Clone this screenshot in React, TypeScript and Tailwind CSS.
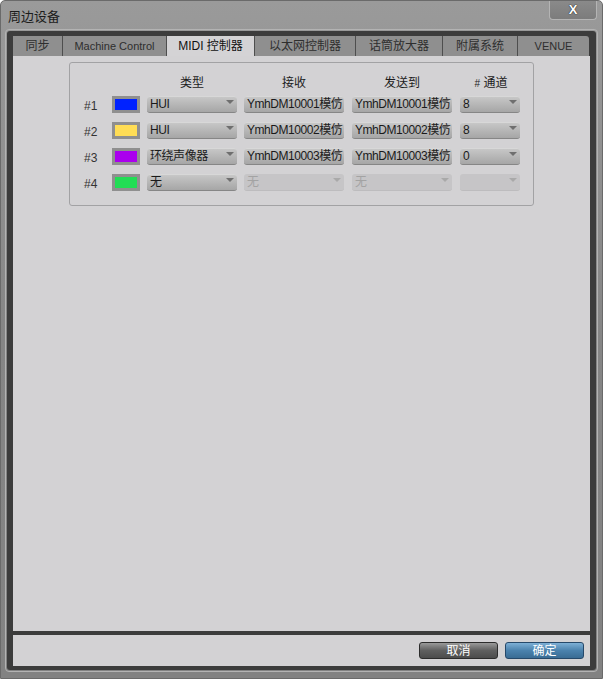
import React from 'react';

const FONT = "font-['Liberation_Sans','Noto_Sans_CJK_SC',sans-serif]";

const TABS = [
  { label: '同步', w: 'w-[50px]' },
  { label: 'Machine Control', w: 'w-[104px]', small: true },
  { label: 'MIDI 控制器', w: 'w-[88px]', active: true },
  { label: '以太网控制器', w: 'w-[101px]' },
  { label: '话筒放大器', w: 'w-[87px]' },
  { label: '附属系统', w: 'w-[75px]' },
  { label: 'VENUE', w: 'w-[71px]', small: true, last: true },
];

const ROWS = [
  { id: '#1', color: 'bg-[#0022ff]', type: 'HUI', rx: 'YmhDM10001模仿', tx: 'YmhDM10001模仿', ch: '8' },
  { id: '#2', color: 'bg-[#ffdd55]', type: 'HUI', rx: 'YmhDM10002模仿', tx: 'YmhDM10002模仿', ch: '8' },
  { id: '#3', color: 'bg-[#aa00ee]', type: '环绕声像器', rx: 'YmhDM10003模仿', tx: 'YmhDM10003模仿', ch: '0' },
  { id: '#4', color: 'bg-[#22dd55]', type: '无', rx: '无', tx: '无', ch: '', off: true },
];

function Select({ value, w, disabled }: { value: string; w: string; disabled?: boolean }) {
  return (
    <div
      className={`relative ${w} h-[17px] rounded-[3px] overflow-hidden flex items-center pl-[3px] text-[12px] tracking-[-0.45px] leading-none whitespace-nowrap ${
        disabled
          ? 'bg-[#c6c5c7] text-[#a3a3a3] border-b border-[#bdbcbe]'
          : 'bg-gradient-to-b from-[#c9c9c9] to-[#a6a6a6] text-[#1a1a1a] border-b border-[#868686] shadow-[inset_0_1px_0_#d8d8d8]'
      }`}
    >
      <span>{value}</span>
      <span
        className={`absolute right-[3px] top-[4px] w-0 h-0 border-l-[4px] border-r-[4px] border-t-[4px] border-l-transparent border-r-transparent ${
          disabled ? 'border-t-[#a9a9a9]' : 'border-t-[#6f6f6f]'
        }`}
      />
    </div>
  );
}

export default function App() {
  return (
    <div className={`${FONT} w-[603px] h-[679px] flex flex-col bg-gradient-to-b from-[#9a9a9a] via-[#858585] to-[#828282] border border-[#6a6a6a] rounded-t-[5px] overflow-hidden`}>
      {/* title bar */}
      <div className="h-[28px] flex items-start justify-between pl-[7px] pr-[5px]">
        <span className="mt-[6px] text-[13px] text-[#1c1c1c]">周边设备</span>
        <button className="w-[48px] h-[19px] flex items-center justify-center rounded-b-[4px] border border-t-0 border-[#b4b4b4] bg-gradient-to-b from-[#8a8a8a] to-[#7c7c7c] text-[13px] font-bold text-white [text-shadow:0_0_1px_#222,0_0_1px_#222]">
          X
        </button>
      </div>

      {/* dark frame */}
      <div className="mx-[4px] mb-[6px] flex-1 rounded-[4px] border border-[#b3b3b3] p-[1px]">
        <div className="h-full bg-[#3c3c3c] rounded-[3px] flex flex-col px-[6px] pt-[5px] pb-[4px]">
          {/* tabs */}
          <div className="flex h-[20px]">
            {TABS.map((t) => (
              <div
                key={t.label}
                className={`${t.w} flex items-center justify-center border-r border-[#4e4e4e] ${
                  t.active ? 'bg-[#d4d3d5] text-[#111]' : 'bg-[#8f8f8f] text-[#2e2e2e]'
                } ${t.small ? 'text-[11px]' : 'text-[12px]'} ${t.last ? 'rounded-tr-[3px] border-r-0' : ''}`}
              >
                {t.label}
              </div>
            ))}
          </div>

          {/* MIDI controller panel */}
          <div className="flex-1 bg-[#d3d2d4] pt-[6px] pl-[56px]">
            <div className="w-[465px] h-[144px] border border-[#a2a2a4] rounded-[3px] pl-[14px] pt-[10px]">
              <div className="flex h-[20px] items-center text-[12px] text-[#1c1c1c]">
                <div className="w-[63px]" />
                <div className="w-[90px] text-center">类型</div>
                <div className="w-[7px]" />
                <div className="w-[100px] text-center">接收</div>
                <div className="w-[8px]" />
                <div className="w-[100px] text-center">发送到</div>
                <div className="w-[8px]" />
                <div className="w-[62px] text-center">
                  <span className="text-[10px]">#</span> 通道
                </div>
              </div>
              <div className="flex flex-col gap-[9px] mt-[3px]">
                {ROWS.map((r) => (
                  <div key={r.id} className="flex items-center h-[17px]">
                    <span className="w-[28px] text-[12px] text-[#333] pt-[2px]">{r.id}</span>
                    <div className="w-[28px] h-[17px] bg-[#8f8f8f] p-[3px]">
                      <div className={`w-full h-full ${r.color}`} />
                    </div>
                    <div className="w-[7px]" />
                    <Select value={r.type} w="w-[90px]" />
                    <div className="w-[7px]" />
                    <Select value={r.rx} w="w-[100px]" disabled={r.off} />
                    <div className="w-[8px]" />
                    <Select value={r.tx} w="w-[100px]" disabled={r.off} />
                    <div className="w-[8px]" />
                    <Select value={r.ch} w="w-[60px]" disabled={r.off} />
                  </div>
                ))}
              </div>
            </div>
          </div>

          {/* footer */}
          <div className="mt-[4px] h-[31px] bg-[#d3d2d4] flex items-start justify-end gap-[7px] pt-[7px] pr-[6px]">
            <button className="w-[79px] h-[17px] rounded-[3px] border border-[#2c2c2c] bg-gradient-to-b from-[#9a9a9a] via-[#5f5f5f] to-[#4c4c4c] text-[12px] leading-none text-white">
              取消
            </button>
            <button className="w-[79px] h-[17px] rounded-[3px] border border-[#26496a] bg-gradient-to-b from-[#7eb0d6] via-[#4b82ad] to-[#3a6c94] text-[12px] leading-none text-white">
              确定
            </button>
          </div>
        </div>
      </div>
    </div>
  );
}
